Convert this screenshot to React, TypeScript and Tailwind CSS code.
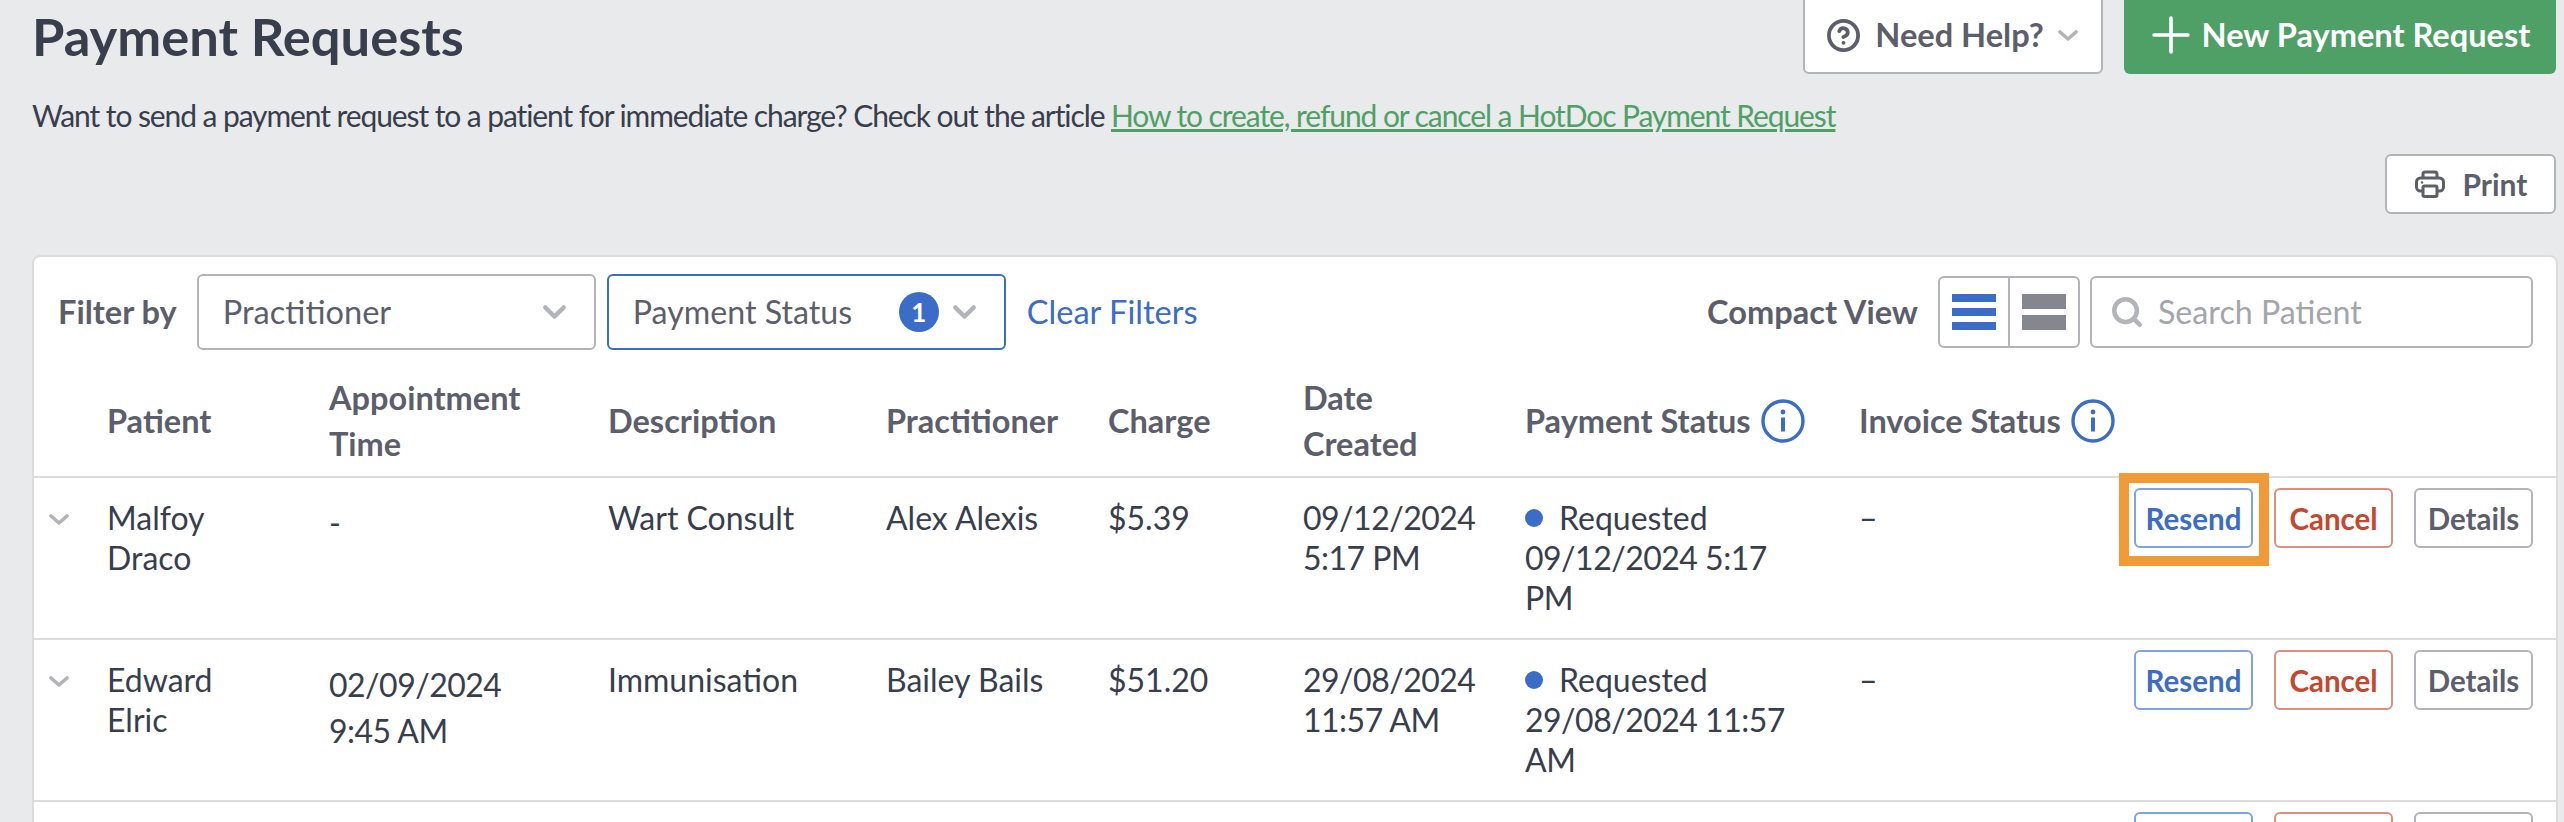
import { CircleHelp, Plus, Search } from "lucide-react";

const gridCols =
  "grid grid-cols-[73px_222px_279px_278px_222px_195px_222px_334px_1fr]";

const rows = [
  {
    patient: ["Malfoy", "Draco"],
    appointment: ["-"],
    description: "Wart Consult",
    practitioner: "Alex Alexis",
    charge: "$5.39",
    created: ["09/12/2024", "5:17 PM"],
    status: "09/12/2024 5:17 PM",
    highlight: true,
  },
  {
    patient: ["Edward", "Elric"],
    appointment: ["02/09/2024", "9:45 AM"],
    description: "Immunisation",
    practitioner: "Bailey Bails",
    charge: "$51.20",
    created: ["29/08/2024", "11:57 AM"],
    status: "29/08/2024 11:57 AM",
    highlight: false,
  },
];

function Chevron({ className }: { className: string }) {
  return (
    <svg viewBox="0 0 20 11" fill="none" preserveAspectRatio="none" className={className}>
      <path d="M2 2 10 9 18 2" stroke="#b3b4b9" strokeWidth="3.6" strokeLinecap="round" strokeLinejoin="round" />
    </svg>
  );
}

function PrinterIcon() {
  return (
    <svg width="30" height="28" viewBox="0 0 30 28" fill="none" stroke="#5c5f6b" strokeWidth="3" className="shrink-0">
      <path d="M8 8V4a2 2 0 0 1 2-2h10a2 2 0 0 1 2 2v4" />
      <rect x="1.5" y="8" width="27" height="13" rx="4" />
      <rect x="8" y="16" width="14" height="10.5" rx="1.5" fill="white" />
      <circle cx="7" cy="12.5" r="1.2" fill="#5c5f6b" stroke="none" />
    </svg>
  );
}

function InfoIcon() {
  return (
    <svg width="44" height="44" viewBox="0 0 44 44" fill="none" className="shrink-0">
      <circle cx="22" cy="22" r="20" stroke="#3a6cc8" strokeWidth="3.4" />
      <circle cx="22" cy="13" r="2.4" fill="#3a6cc8" />
      <rect x="20" y="18.5" width="4" height="14" fill="#3a6cc8" />
    </svg>
  );
}

function ActionButtons({ highlight }: { highlight?: boolean }) {
  return (
    <div className="flex justify-end gap-[21px] pt-[10px] pr-[23px] font-bold text-[29.5px]">
      <div className="relative">
        <button className="w-[119px] h-[60px] rounded-[6px] border-2 border-[#7fa3e0] bg-white pt-[2px] text-[#3a6cc8]">
          Resend
        </button>
        {highlight && (
          <div className="absolute left-[-15px] top-[-15px] w-[150px] h-[93px] border-[10px] border-[#f19a38]" />
        )}
      </div>
      <button className="w-[119px] h-[60px] rounded-[6px] border-2 border-[#df8d7c] bg-white pt-[2px] text-[#c4472e]">
        Cancel
      </button>
      <button className="w-[119px] h-[60px] rounded-[6px] border-2 border-[#b3b4b9] bg-white pt-[2px] text-[#5c5f6b]">
        Details
      </button>
    </div>
  );
}

export default function App() {
  return (
    <div className="h-[822px] w-[2564px] overflow-hidden bg-[#e9eaec] font-['Lato',sans-serif] text-[32px] leading-[40px] text-[#383e4c]">
      <div className="flex items-start justify-between pl-[32px] pr-[8px]">
        <h1 className="mt-[7px] text-[52.5px] leading-[58px] font-bold text-[#383e4c]">
          Payment Requests
        </h1>
        <div className="-mt-[10px] flex gap-[21px]">
          <button className="flex h-[84px] w-[300px] items-center justify-center gap-[14px] rounded-[6px] border-2 border-[#b3b4b9] bg-white pt-[6px] pr-[2px] text-[32.6px] font-bold text-[#5c5f6b]">
            <CircleHelp size={35} strokeWidth={2.6} />
            Need Help?
            <Chevron className="h-[11px] w-[20px]" />
          </button>
          <button className="flex h-[84px] w-[432px] items-center justify-center gap-[2px] rounded-[6px] bg-[#4fa066] pt-[6px] pr-[8px] text-[32.6px] font-bold text-white">
            <Plus size={58} strokeWidth={1.5} />
            New Payment Request
          </button>
        </div>
      </div>
      <p className="mt-[21px] pl-[32px] text-[30px] tracking-[-1.09px]">
        Want to send a payment request to a patient for immediate charge? Check out the article{" "}
        <a className="text-[#4fa066] underline">How to create, refund or cancel a HotDoc Payment Request</a>
      </p>
      <div className="mt-[19px] flex justify-end pr-[8px]">
        <button className="flex h-[60px] w-[171px] items-center justify-center gap-[17px] rounded-[6px] border-2 border-[#b3b4b9] bg-white pl-[2px] text-[30px] font-bold text-[#5c5f6b]">
          <PrinterIcon />
          Print
        </button>
      </div>
      <div className="mt-[41px] ml-[32px] mr-[6px] rounded-t-[8px] border-2 border-[#dcdcdc] bg-white">
        <div className="flex items-center pr-[23px] pl-[24px] pt-[17px] text-[32.6px]">
          <span className="font-bold text-[#5c5f6b]">Filter by</span>
          <button className="ml-[20px] flex h-[76px] w-[399px] items-center justify-between rounded-[6px] border-2 border-[#b3b4b9] pr-[28px] pl-[24px] text-[#5c5f6b]">
            Practitioner
            <Chevron className="h-[14px] w-[23px]" />
          </button>
          <button className="ml-[11px] flex h-[76px] w-[399px] items-center rounded-[6px] border-2 border-[#3a6cc8] pr-[28px] pl-[24px] text-[32.2px] text-[#5c5f6b]">
            Payment Status
            <span className="ml-auto flex h-[40px] w-[40px] items-center justify-center rounded-full bg-[#3a6cc8] text-[26px] font-bold text-white">
              1
            </span>
            <Chevron className="ml-[14px] h-[14px] w-[23px]" />
          </button>
          <a className="ml-[21px] text-[#3a6cc8]">Clear Filters</a>
          <span className="ml-auto font-bold text-[#5c5f6b]">Compact View</span>
          <div className="ml-[20px] flex h-[72px] w-[142px] rounded-[6px] border-2 border-[#b3b4b9]">
            <div className="flex flex-1 flex-col items-center justify-center gap-[6px] border-r-2 border-[#b3b4b9]">
              <div className="h-[8px] w-[44px] bg-[#3a6cc8]" />
              <div className="h-[8px] w-[44px] bg-[#3a6cc8]" />
              <div className="h-[8px] w-[44px] bg-[#3a6cc8]" />
            </div>
            <div className="flex flex-1 flex-col items-center justify-center gap-[6px]">
              <div className="h-[15px] w-[44px] bg-[#85878e]" />
              <div className="h-[15px] w-[44px] bg-[#85878e]" />
            </div>
          </div>
          <div className="ml-[10px] flex h-[72px] w-[443px] items-center gap-[14px] rounded-[6px] border-2 border-[#b3b4b9] pl-[18px] text-[32.2px] text-[#a3a5ab]">
            <Search size={34} strokeWidth={3.2} className="text-[#b3b4b9]" />
            Search Patient
          </div>
        </div>
        <div className={`${gridCols} h-[128px] items-center border-b-2 border-[#dcdcdc] pt-[16px] text-[32.5px] font-bold text-[#5c5f6b] leading-[46px]`}>
          <div />
          <div>Patient</div>
          <div>
            Appointment
            <br />
            Time
          </div>
          <div>Description</div>
          <div>Practitioner</div>
          <div>Charge</div>
          <div>
            Date
            <br />
            Created
          </div>
          <div className="flex items-center gap-[10px]">
            Payment Status
            <InfoIcon />
          </div>
          <div className="flex items-center gap-[10px]">
            Invoice Status
            <InfoIcon />
          </div>
        </div>
        {rows.map((row) => (
          <div key={row.status} className={`${gridCols} h-[162px] border-b-2 border-[#dcdcdc]`}>
            <div className="pt-[36px] pl-[15px]">
              <Chevron className="h-[11px] w-[20px]" />
            </div>
            <div className="pt-[20px]">
              {row.patient.map((line) => (
                <div key={line}>{line}</div>
              ))}
            </div>
            <div className="pt-[22px] leading-[46px] tracking-[-0.5px]">
              {row.appointment.map((line) => (
                <div key={line}>{line}</div>
              ))}
            </div>
            <div className="pt-[20px]">{row.description}</div>
            <div className="pt-[20px]">{row.practitioner}</div>
            <div className="pt-[20px]">{row.charge}</div>
            <div className="pt-[20px] tracking-[-0.5px]">
              {row.created.map((line) => (
                <div key={line}>{line}</div>
              ))}
            </div>
            <div className="pt-[20px] pr-[60px]">
              <div className="flex items-center gap-[16px]">
                <span className="h-[18px] w-[18px] rounded-full bg-[#3a6cc8]" />
                Requested
              </div>
              <span className="tracking-[-0.5px]">{row.status}</span>
            </div>
            <div className="flex justify-between">
              <div className="pt-[20px]">–</div>
              <ActionButtons highlight={row.highlight} />
            </div>
          </div>
        ))}
        <div className={`${gridCols} h-[80px]`}>
          <div className="col-span-8" />
          <ActionButtons />
        </div>
      </div>
    </div>
  );
}
